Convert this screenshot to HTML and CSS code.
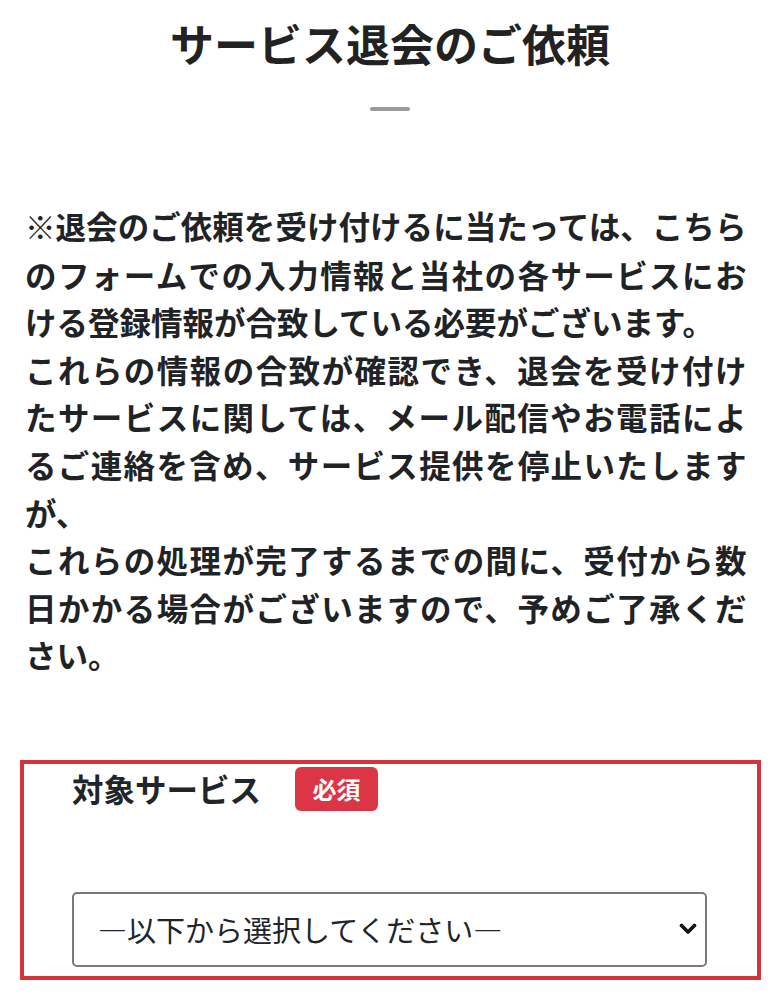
FILE: index.html
```html
<!DOCTYPE html>
<html lang="ja">
<head>
<meta charset="utf-8">
<title>サービス退会のご依頼</title>
<link rel="stylesheet" href="styles.css">
</head>
<body>
<main class="page">
  <h1 class="title">サービス退会のご依頼</h1>
  <div class="title-bar"></div>
  <p class="notice">※退会のご依頼を受け付けるに当たっては、こちらのフォームでの入力情報と当社の各サービスにおける登録情報が合致している必要がございます。<br>これらの情報の合致が確認でき、退会を受け付けたサービスに関しては、メール配信やお電話によるご連絡を含め、サービス提供を停止いたしますが、<br>これらの処理が完了するまでの間に、受付から数日かかる場合がございますので、予めご了承ください。</p>
  <section class="field">
    <div class="field-head">
      <label class="field-label" for="service">対象サービス</label>
      <span class="badge">必須</span>
    </div>
    <div class="select-wrap">
      <select id="service" class="select">
        <option>—以下から選択してください—</option>
      </select>
      <svg class="chevron" width="18" height="14" viewBox="0 0 18 14" aria-hidden="true">
        <path d="M2.5 3.5 L9 10 L15.5 3.5" fill="none" stroke="#111" stroke-width="3.6" stroke-linecap="round" stroke-linejoin="round"/>
      </svg>
    </div>
  </section>
</main>
</body>
</html>
```
FILE: styles.css
```css
* {
  box-sizing: border-box;
}

html, body {
  margin: 0;
  padding: 0;
  background: #fff;
}

body {
  font-family: "Noto Sans CJK JP", "Noto Sans", sans-serif;
  color: #212529;
}

.page {
  display: flex;
  flex-direction: column;
}

.title {
  margin: 0;
  padding-top: 10px;
  font-size: 44px;
  line-height: 66px;
  font-weight: 700;
  text-align: center;
  color: #222;
}

.title-bar {
  width: 40px;
  height: 4px;
  margin: 31px auto 0;
  background: #9a9a9a;
  border-radius: 2px;
}

.notice {
  margin: 91px 0 0 25px;
  width: 721.4px;
  font-size: 31.5px;
  line-height: 47.6px;
  font-weight: 700;
  color: #1f2326;
  text-align: justify;
}

.notice::first-letter {
  font-size: 30.5px;
}

.field {
  margin: 81px 0 0 20px;
  width: 741px;
  height: 220px;
  border: 4px solid #d4343a;
  padding: 0 48px 0 48px;
  display: flex;
  flex-direction: column;
}

.field-head {
  display: flex;
  align-items: flex-start;
  gap: 34px;
}

.field-label {
  font-size: 31.5px;
  line-height: 44px;
  font-weight: 700;
  color: #212529;
  padding-top: 2px;
}

.badge {
  margin-top: 3px;
  width: 83px;
  height: 44px;
  border-radius: 6px;
  background: #dc3545;
  color: #fff;
  font-size: 24px;
  font-weight: 700;
  display: flex;
  align-items: center;
  justify-content: center;
}

.select-wrap {
  position: relative;
  margin-top: 81px;
  width: 635px;
}

.select {
  appearance: none;
  -webkit-appearance: none;
  width: 100%;
  height: 75px;
  border: 2px solid #7a7a7a;
  border-radius: 5px;
  background: #fff;
  padding: 0 60px 0 24px;
  font-family: "Noto Sans CJK JP", "Noto Sans", sans-serif;
  font-size: 29px;
  font-weight: 400;
  color: #212529;
}

.chevron {
  position: absolute;
  right: 10px;
  top: 30px;
}
```
